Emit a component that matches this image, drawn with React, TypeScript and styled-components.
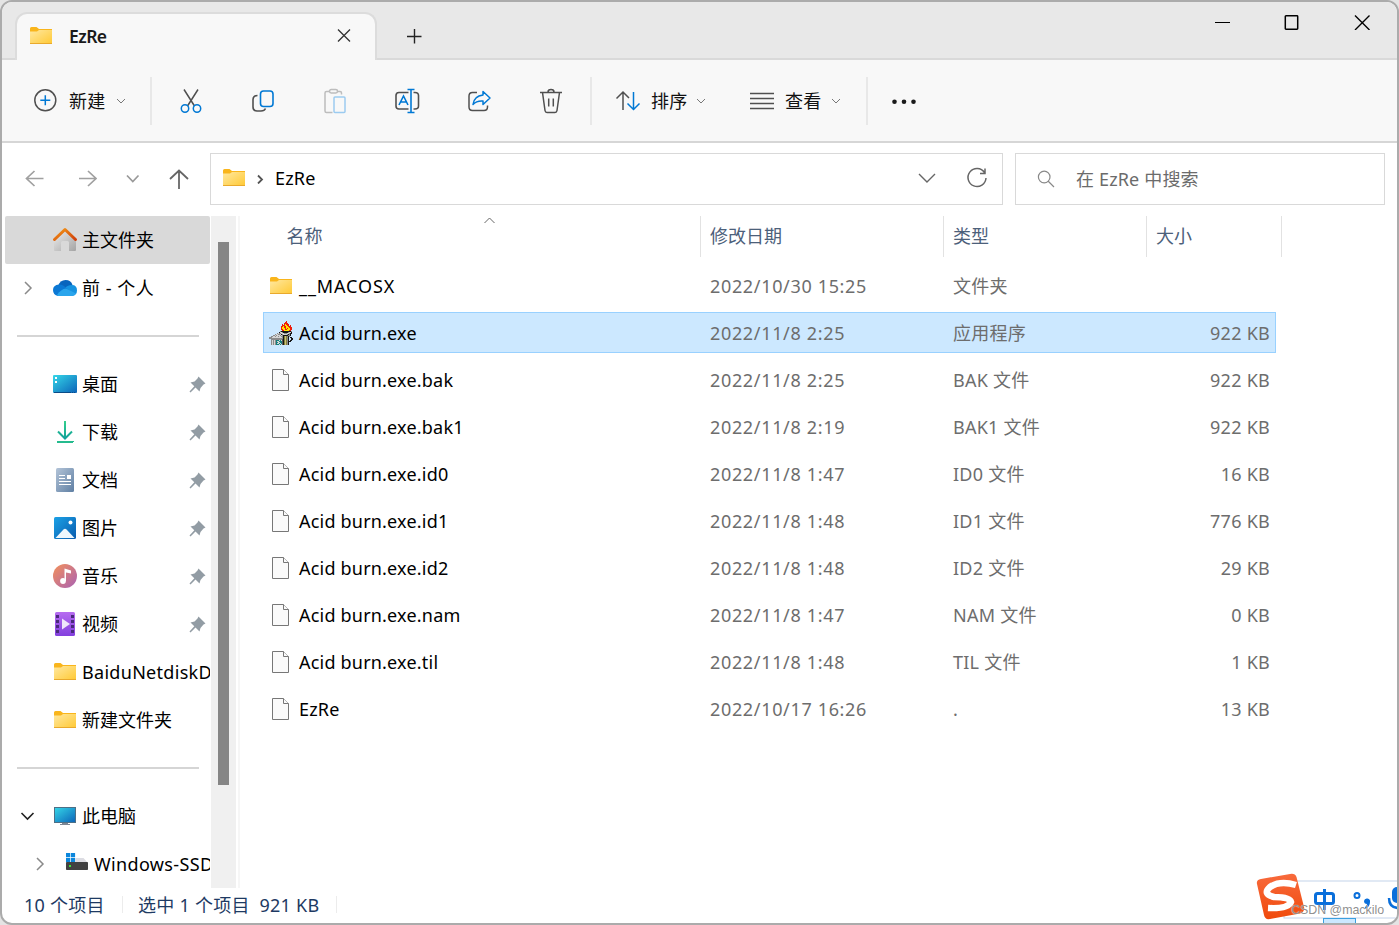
import React from "react";
import styled, { createGlobalStyle } from "styled-components";

const Global = createGlobalStyle`
  * { box-sizing: border-box; }
  html, body { margin: 0; height: 100%; overflow: hidden; }
  body {
    font-family: "Noto Sans", "Noto Sans CJK SC", sans-serif;
    font-size: 18px;
    font-weight: 400;
    color: #000;
    background: #e4e4e4;
  }
  svg { display: block; flex: none; }
`;

const Window = styled.div`
  position: relative;
  width: 1399px;
  height: 925px;
  border: 2px solid #ababab;
  border-radius: 12px;
  background: #fff;
  display: flex;
  flex-direction: column;
  overflow: hidden;
`;

const TitleBar = styled.header`
  height: 58px;
  flex: none;
  display: flex;
  background: #e8e8e8;
  border-bottom: 2px solid #d9d9d9;
  padding: 10px 0 0 13px;
`;

const Tab = styled.div`
  width: 362px;
  height: 48px;
  flex: none;
  display: flex;
  align-items: center;
  padding: 0 23px 2px 12px;
  background: #f8f8f8;
  border: 2px solid #dcdcdc;
  border-bottom: 0;
  border-radius: 12px 12px 0 0;
`;

const TabTitle = styled.span`
  flex: 1;
  margin-left: 16px;
  font-size: 17.5px;
  font-weight: 600;
  letter-spacing: -0.55px;
  color: #1a1a1a;
`;

const NewTab = styled.div`
  margin: 15px 0 0 28px;
  flex: 1;
`;

const Caption = styled.div`
  display: flex;
  gap: 54px;
  margin: 0 27px 0 0;
`;

const Toolbar = styled.nav`
  height: 83px;
  flex: none;
  display: flex;
  align-items: center;
  background: #f8f8f8;
  border-bottom: 2px solid #d6d6d6;
  padding-left: 31px;
`;

const Tool = styled.div<{ $w: number; $gap?: number }>`
  width: ${(p) => p.$w}px;
  flex: none;
  display: flex;
  align-items: center;
  gap: ${(p) => p.$gap ?? 0}px;
  color: #111;
`;

const ToolLabel = styled.span`
  line-height: 24px;
  letter-spacing: 0.3px;
  margin-right: -2px;
`;

const Divider = styled.i<{ $right: number }>`
  width: 2px;
  height: 48px;
  flex: none;
  margin-right: ${(p) => p.$right}px;
  background: #e8e8e8;
`;

const NavBar = styled.div`
  height: 73px;
  flex: none;
  display: flex;
  padding: 10px 12px 11px 22px;
`;

const NavButtons = styled.div`
  width: 186px;
  flex: none;
  display: flex;
  align-items: center;
`;

const NavSlot = styled.div<{ $w: number }>`
  width: ${(p) => p.$w}px;
`;

const Field = styled.div<{ $w: number; $left: number; $gap?: number }>`
  width: ${(p) => p.$w}px;
  height: 52px;
  flex: none;
  display: flex;
  align-items: center;
  margin-left: ${(p) => p.$gap ?? 0}px;
  padding: 0 14px 2px ${(p) => p.$left}px;
  border: 1px solid #d9d9d9;
`;

const PathText = styled.span`
  flex: 1;
  margin-left: 11px;
  letter-spacing: 0.2px;
`;

const SearchText = styled.span`
  margin-left: 19px;
  color: #6b6b6b;
  letter-spacing: 0.15px;
`;

const RefreshSlot = styled.div`
  margin-left: 30px;
`;

const Body = styled.main`
  height: 672px;
  flex: none;
  display: flex;
`;

const Sidebar = styled.aside`
  width: 208px;
  padding-left: 3px;
  flex: none;
  overflow: hidden;
`;

const SideRow = styled.div<{ $active?: boolean; $indent?: number }>`
  height: 48px;
  display: flex;
  align-items: center;
  padding-left: ${(p) => p.$indent ?? 0}px;
  background: ${(p) => (p.$active ? "#d9d9d9" : "transparent")};
  border-radius: 2px;
`;

const Chevron = styled.div`
  width: 46px;
  padding-left: 15px;
  flex: none;
`;

const SideIcon = styled.div`
  width: 28px;
  flex: none;
  display: flex;
  justify-content: center;
`;

const SideLabel = styled.span<{ $track?: number }>`
  flex: 1;
  min-width: 0;
  overflow: hidden;
  white-space: nowrap;
  margin-left: 3px;
  line-height: 28px;
  letter-spacing: ${(p) => p.$track ?? 0}px;
`;

const PinSlot = styled.div`
  width: 21px;
`;

const SideRule = styled.div`
  height: 48px;
  padding: 23px 11px 0 12px;
  &::after {
    content: "";
    display: block;
    height: 2px;
    background: #d5d5d5;
  }
`;

const ScrollTrack = styled.div`
  width: 25px;
  margin-left: 1px;
  flex: none;
  background: #f0f0f0;
  padding: 26px 7px 0;
`;

const ScrollThumb = styled.div`
  height: 543px;
  background: #868686;
`;

const Splitter = styled.div`
  width: 2px;
  margin-left: 2px;
  flex: none;
  background: #f6f6f6;
`;

const List = styled.section`
  flex: 1;
  padding-left: 23px;
`;

const HeadRow = styled.div`
  display: flex;
  height: 49px;
`;

const HeadCell = styled.div<{ $w: number; $left: number }>`
  position: relative;
  width: ${(p) => p.$w}px;
  height: 41px;
  padding-left: ${(p) => p.$left}px;
  line-height: 41px;
  color: #4c607a;
  border-right: 1px solid #e2e2e2;
`;

const SortMark = styled.div`
  position: absolute;
  top: 1px;
  left: 220px;
`;

const FileRow = styled.div<{ $selected?: boolean }>`
  width: 1013px;
  height: 41px;
  margin-bottom: 6px;
  display: flex;
  align-items: center;
  line-height: 28px;
  border: 1px solid ${(p) => (p.$selected ? "#99d1ff" : "transparent")};
  background: ${(p) => (p.$selected ? "#cce8ff" : "transparent")};
`;

const FileIcon = styled.div`
  width: 35px;
  padding-left: 5px;
  flex: none;
`;

const FileName = styled.span<{ $track: number }>`
  width: 411px;
  letter-spacing: ${(p) => p.$track}px;
`;

const Meta = styled.span<{ $w: number; $right?: boolean; $track?: number }>`
  width: ${(p) => p.$w}px;
  text-align: ${(p) => (p.$right ? "right" : "left")};
  letter-spacing: ${(p) => p.$track ?? 0}px;
  color: #6d6d6d;
`;

const StatusBar = styled.footer`
  flex: 1;
  display: flex;
  align-items: center;
  padding: 0 0 3px 22px;
  color: #1e3a63;
`;

const StatusText = styled.span<{ $w: number }>`
  width: ${(p) => p.$w}px;
  white-space: pre;
  letter-spacing: 0.25px;
`;

const StatusRule = styled.i<{ $right: number }>`
  width: 1px;
  height: 17px;
  background: #ececec;
  margin-right: ${(p) => p.$right}px;
`;

const ImeBar = styled.div`
  position: absolute;
  right: -2px;
  bottom: -2px;
  width: 145px;
  height: 55px;
`;

const Watermark = styled.span`
  position: absolute;
  left: 37px;
  top: 32px;
  font: 12.4px/16px "Liberation Sans", sans-serif;
  white-space: nowrap;
  color: rgba(130, 130, 130, 0.9);
  text-shadow: 0 0 1px #fff;
`;

const HiddenDefs = styled.svg`
  position: absolute;
`;

const Defs = () => (
  <HiddenDefs width="0" height="0">
    <defs>
      <linearGradient id="fold" x1="0" y1="0" x2="1" y2="1"><stop stopColor="#ffe8a0" /><stop offset="1" stopColor="#ffc934" /></linearGradient>
      <linearGradient id="screen" x1="0" y1="0" x2="1" y2="1"><stop stopColor="#35d7e8" /><stop offset="1" stopColor="#0b63b8" /></linearGradient>
      <linearGradient id="roof" x1="0" y1="0" x2="1" y2="1"><stop stopColor="#f59a17" /><stop offset="1" stopColor="#cf3f0c" /></linearGradient>
      <linearGradient id="wall" x1="0" y1="0" x2="1" y2="1"><stop stopColor="#ededed" /><stop offset="1" stopColor="#a4a4a4" /></linearGradient>
      <linearGradient id="down" x1="0" y1="0" x2="0" y2="1"><stop stopColor="#34cf8c" /><stop offset="1" stopColor="#10a29a" /></linearGradient>
      <linearGradient id="doc" x1="0" y1="0" x2="1" y2="1"><stop stopColor="#b3c4d8" /><stop offset="1" stopColor="#5f7fa3" /></linearGradient>
      <linearGradient id="pic" x1="0" y1="0" x2="1" y2="1"><stop stopColor="#1ba1e6" /><stop offset="1" stopColor="#0a5cae" /></linearGradient>
      <linearGradient id="music" x1="0" y1="0" x2="1" y2="1"><stop stopColor="#f4915a" /><stop offset="1" stopColor="#a961b4" /></linearGradient>
      <linearGradient id="video" x1="0" y1="0" x2="0" y2="1"><stop stopColor="#b66cf0" /><stop offset="1" stopColor="#8340de" /></linearGradient>
      <linearGradient id="sogou" x1="0" y1="0" x2="0" y2="1"><stop stopColor="#f86a3c" /><stop offset="1" stopColor="#f04a0c" /></linearGradient>
    </defs>
  </HiddenDefs>
);

const Folder = () => (
  <svg width="24" height="20" viewBox="0 0 24 20">
    <path d="M1 2.500Q1 1 2.500 1H7.500L10 3H23V8H1Z" fill="#f9b51c" />
    <path d="M1 5.500H8L10 4H23V18H1Z" fill="url(#fold)" />
    <path d="M1 17.500H23" stroke="#e9a92c" />
  </svg>
);

const Page = () => (
  <svg width="20" height="24" viewBox="0 0 20 24" fill="#fafafa" stroke="#777">
    <path d="M3.500 1.500H14.500L19.500 6.500V22.500H3.500Z" />
    <path d="M14.500 1.500V6.500H19.500" />
  </svg>
);

const sprite = [
  ".................r......",
  "................rr......",
  "...............rrrr.....",
  ".............r.ryrrr....",
  ".............rrryyrr.r..",
  "............rryrryyrrr..",
  "............ryyrryyyrrr.",
  "............ryyyryryyrr.",
  "............rryyrryyyrr.",
  ".............rryyyyyrr..",
  "...........gkkkkkkkkkkg.",
  "..........kwwgkkkkkgwwk.",
  "........gwggwwwgggwwgkk.",
  "......gwwggwkgwwwwgkgk..",
  "....ggwgwwwgwgkkkkkggk..",
  "..ggwwgwwgwwggkoyogkg...",
  "gggwwwwwwwwwwgkoyogk.kk.",
  "ggggggggggggggkoyogk..kk",
  "..gggggggggggskoyogk..kk",
  "..gwgwgtttwtwskoyogk.kk.",
  "..gwgwgtwwtttskoyogkkk..",
  "..gwgwgttwwttskoyogk....",
  "..gwgwgtwwtwtskoyogk....",
  "..gwgwgtttwtwskoyogk....",
];
const inks: Record<string, string> = { r: "#ed1c0c", y: "#ffe600", k: "#151515", g: "#8b8b8b", w: "#d5d5d5", o: "#85803a", t: "#118080", s: "#555" };

const Torch = () => (
  <svg width="24" height="24" viewBox="0 0 24 24" shapeRendering="crispEdges">
    {sprite.flatMap((line, y) =>
      [...line].map((c, x) => (c === "." ? null : <rect key={`${x}-${y}`} x={x} y={y} width="1" height="1" fill={c === "y" && y > 13 ? "#c9c37a" : inks[c]} />))
    )}
  </svg>
);

const Home = () => (
  <svg width="26" height="26" viewBox="0 0 26 26">
    <path d="M2 13L13 4L24 13V23Q24 24 23 24H17V15.500Q17 14 15.500 14H10.500Q9 14 9 15.500V24H3Q2 24 2 23Z" fill="url(#wall)" />
    <path d="M2.500 12.500L13 2.500L23.500 12.500" fill="none" stroke="url(#roof)" strokeWidth="3" strokeLinejoin="round" strokeLinecap="round" />
  </svg>
);

const Cloud = () => (
  <svg width="26" height="18" viewBox="0 0 26 18">
    <path d="M6 7Q8 1 13.500 1Q19 1 20.500 6L16 13L5 12Z" fill="#0864bd" />
    <path d="M20 6Q25 6 25 11.500Q25 16 20 17L12 10Q15 6 20 6Z" fill="#1592e0" />
    <path d="M7 5.500Q11 5 14 9L18 12L6 17Q1 16 1 11Q1 6 7 5.500Z" fill="#0b78d4" />
    <path d="M5 16Q9 10 14 9.500L24 14.500Q22.500 17 20 17H6.500Q5 17 5 16Z" fill="#2aa5ec" />
  </svg>
);

const Desktop = () => (
  <svg width="24" height="18" viewBox="0 0 24 18">
    <rect width="24" height="18" rx="1" fill="url(#screen)" />
    <path d="M2 2h2v2H2zM2 6h2v2H2z" fill="#fff" />
    <path d="M1 17.500H18M19 17.500H20M21 17.500H22" stroke="#0b4b86" />
  </svg>
);

const Download = () => (
  <svg width="18" height="24" viewBox="0 0 18 24" fill="none" stroke="url(#down)" strokeWidth="2">
    <path d="M9.010 1L9 18M2 11.500L9 18.500L16 11.500" /><path d="M1 22H17V22.010" stroke="#25bb8e" />
  </svg>
);

const Doc = () => (
  <svg width="18" height="24" viewBox="0 0 18 24">
    <rect width="18" height="24" rx="1.500" fill="url(#doc)" />
    <path d="M3 7.500H9M3 10.500H9M3 13.500H15M3 16.500H15" stroke="#fff" strokeWidth="1.200" />
    <rect x="11" y="7" width="4" height="4" fill="#fff" />
  </svg>
);

const Picture = () => (
  <svg width="22" height="22" viewBox="0 0 22 22">
    <rect width="22" height="22" rx="1.500" fill="url(#pic)" />
    <path d="M1.500 21L9.500 12.500Q11 11 12.500 12.500L20.500 21Z" fill="#eef7fd" />
    <circle cx="16.500" cy="5.500" r="2" fill="#fff" />
  </svg>
);

const Music = () => (
  <svg width="24" height="24" viewBox="0 0 24 24">
    <circle cx="12" cy="12" r="12" fill="url(#music)" />
    <circle cx="10" cy="17" r="2.900" fill="#fff" />
    <path d="M11.500 17V4.500L18 6.500V9.500L13 8.500V17Z" fill="#fff" />
  </svg>
);

const Video = () => (
  <svg width="20" height="24" viewBox="0 0 20 24">
    <rect width="20" height="24" rx="1.500" fill="url(#video)" />
    <path d="M1 3h3v3H1zM1 8h3v3H1zM1 13h3v3H1zM1 18h3v3H1zM16 3h3v3h-3zM16 8h3v3h-3zM16 13h3v3h-3zM16 18h3v3h-3z" fill="#4a2a7c" />
    <path d="M7 6.500L15 12L7 17.500Z" fill="#efe6fa" />
  </svg>
);

const Computer = () => (
  <svg width="24" height="20" viewBox="0 0 24 20">
    <path d="M9 16h6v2h2v1H7v-1h2z" fill="#7c8794" />
    <rect x="1.500" y="1.500" width="21" height="15" fill="url(#screen)" stroke="#4d6f86" />
  </svg>
);

const Drive = () => (
  <svg width="24" height="22" viewBox="0 0 24 22">
    <path d="M11 5H18.500L23 10H1L3 7Z" fill="#dcdce2" />
    <rect x="1" y="9" width="22" height="8" rx="0.800" fill="#414141" />
    <rect x="4" y="12" width="2" height="2" fill="#3be03b" />
    <path d="M0.500 -1h10v10h-10z" fill="#fff" />
    <path d="M1 0h4.200v4.200H1zM5.900 0h4.200v4.200H5.900zM1 4.900h4.200v4.200H1zM5.900 4.900h4.200v4.200H5.900z" fill="#0c87dc" />
  </svg>
);

const Pin = () => (
  <svg width="17" height="17" viewBox="0 0 17 17">
    <path d="M9.500 0.500L16.500 7.500L14.500 8.500L11.500 12L10.500 15.500L6.500 11.500L1.500 16.500L0.500 15.500L5.300 10.300L1.500 6.500L5.500 5.500L8.500 2.500Z" fill="#929ca4" />
  </svg>
);

const Glyph = ({ w, h, d, c = "#333", s = 1.3 }: { w: number; h: number; d: string; c?: string; s?: number }) => (
  <svg width={w} height={h} viewBox={`0 0 ${w} ${h}`} fill="none" stroke={c} strokeWidth={s}>
    <path d={d} />
  </svg>
);

const SmallDown = () => <Glyph w={10} h={8} d="M1 2L5 6L9 2" c="#777" s={1} />;

const blue = "#0078d4";
const ink = "#505050";

const NewIcon = () => (
  <svg width="24" height="26" viewBox="0 0 24 26" fill="none" strokeWidth="1.500">
    <circle cx="12.300" cy="12.300" r="10.500" stroke={ink} /><path d="M12.300 7.300V17.300M7.300 12.300H17.300" stroke={blue} />
  </svg>
);
const CutIcon = () => (
  <svg width="24" height="26" viewBox="0 0 24 26" fill="none" strokeWidth="1.500">
    <path d="M5 1.500L15.500 18M19 1.500L8.500 18" stroke={ink} />
    <circle cx="6" cy="20.500" r="3.700" stroke={blue} /><circle cx="18" cy="20.500" r="3.700" stroke={blue} />
  </svg>
);
const CopyIcon = () => (
  <svg width="24" height="24" viewBox="0 0 24 24" fill="none" strokeWidth="1.600">
    <path d="M6.500 6.500Q2 6.500 2 10.500V18Q2 22 6 22H10Q13.500 22 14.500 19.500" stroke={ink} />
    <rect x="9.500" y="2" width="12.500" height="15.500" rx="3" stroke={blue} />
  </svg>
);
const PasteIcon = () => (
  <svg width="24" height="26" viewBox="0 0 24 26" fill="none" strokeWidth="1.500">
    <path d="M6.500 3.500H3.500Q2 3.500 2 5V23Q2 24.500 3.500 24.500H9.500M14 3.500H17Q18.500 3.500 18.500 5V6.500" stroke="#bdbdbd" />
    <rect x="6.500" y="1.500" width="8" height="3.500" rx="1.700" stroke="#bdbdbd" />
    <rect x="11" y="9" width="11" height="15.500" rx="1" stroke="#9ccbf0" />
  </svg>
);
const RenameIcon = () => (
  <svg width="26" height="26" viewBox="0 0 26 26" fill="none" strokeWidth="1.600">
    <path d="M14.500 4.500H5Q2 4.500 2 7.500V18Q2 21 5 21H14.500M19.500 4.500H21Q24.500 4.500 24.500 7.500V18Q24.500 21 21 21H19.500" stroke={ink} />
    <path d="M17 2V24M13.500 1.500H20.500M13.500 24.500H20.500M5 17L9.500 8L14 17M6.500 14H12.500" stroke={blue} />
  </svg>
);
const ShareIcon = () => (
  <svg width="26" height="24" viewBox="0 0 26 24" fill="none" strokeWidth="1.500" strokeLinejoin="round">
    <path d="M10 3.500H5.500Q2 3.500 2 7V18Q2 21.500 5.500 21.500H17Q20.500 21.500 20.500 18V16.500" stroke={ink} />
    <path d="M16 2.500L23 9L16 15.500V12Q9.500 11.500 6 15.500Q7 7 16 6Z" stroke={blue} />
  </svg>
);
const TrashIcon = () => (
  <svg width="24" height="26" viewBox="0 0 24 26" fill="none" stroke={ink} strokeWidth="1.500">
    <path d="M1 4.500H23M3.500 4.500L6 22.500Q6.300 24.500 8 24.500H16Q17.700 24.500 18 22.500L20.500 4.500M9 4Q9 1.500 12 1.500Q15 1.500 15 4M9.700 10.500V18.500M14.300 10.500V18.500" />
  </svg>
);
const SortIcon = () => (
  <svg width="26" height="22" viewBox="0 0 26 22" fill="none" strokeWidth="1.500">
    <path d="M8 20V2M1.500 8.500L8 2L14 8" stroke={ink} /><path d="M18.500 2V20M12.500 13.500L18.500 19.500L24.500 13.500" stroke={blue} />
  </svg>
);

const files = [
  ["folder", "__MACOSX", "2022/10/30 15:25", "文件夹", ""],
  ["torch", "Acid burn.exe", "2022/11/8 2:25", "应用程序", "922 KB"],
  ["page", "Acid burn.exe.bak", "2022/11/8 2:25", "BAK 文件", "922 KB"],
  ["page", "Acid burn.exe.bak1", "2022/11/8 2:19", "BAK1 文件", "922 KB"],
  ["page", "Acid burn.exe.id0", "2022/11/8 1:47", "ID0 文件", "16 KB"],
  ["page", "Acid burn.exe.id1", "2022/11/8 1:48", "ID1 文件", "776 KB"],
  ["page", "Acid burn.exe.id2", "2022/11/8 1:48", "ID2 文件", "29 KB"],
  ["page", "Acid burn.exe.nam", "2022/11/8 1:47", "NAM 文件", "0 KB"],
  ["page", "Acid burn.exe.til", "2022/11/8 1:48", "TIL 文件", "1 KB"],
  ["page", "EzRe", "2022/10/17 16:26", ".", "13 KB"],
];

const pinned: [string, React.ReactNode][] = [
  ["桌面", <Desktop />],
  ["下载", <Download />],
  ["文档", <Doc />],
  ["图片", <Picture />],
  ["音乐", <Music />],
  ["视频", <Video />],
];

export default function App() {
  return (
    <>
      <Global />
      <Defs />
      <Window>
        <TitleBar>
          <Tab>
            <Folder />
            <TabTitle>EzRe</TabTitle>
            <Glyph w={16} h={16} d="M2 1.500L14 13.500M14 1.500L2 13.500" s={1.300} />
          </Tab>
          <NewTab><Glyph w={18} h={18} d="M9.500 2V16.500M2 9.500H16.500" c="#222" s={1.400} /></NewTab>
          <Caption>
            <Glyph w={16} h={18} d="M1 10.500H16" c="#000" s={1} />
            <Glyph w={16} h={18} d="M2 3.800H13Q13.700 3.800 13.700 4.500V16.500Q13.700 17.200 13 17.200H2Q1.300 17.200 1.300 16.500V4.500Q1.300 3.800 2 3.800Z" c="#000" s={1.500} />
            <Glyph w={16} h={18} d="M1 3.500L15.500 18M15.500 3.500L1 18" c="#000" s={1.400} />
          </Caption>
        </TitleBar>
        <Toolbar>
          <Tool $w={117} $gap={12}><NewIcon /><ToolLabel>新建</ToolLabel><SmallDown /></Tool>
          <Divider $right={27} />
          <Tool $w={72}><CutIcon /></Tool>
          <Tool $w={72}><CopyIcon /></Tool>
          <Tool $w={71}><PasteIcon /></Tool>
          <Tool $w={73}><RenameIcon /></Tool>
          <Tool $w={72}><ShareIcon /></Tool>
          <Tool $w={51}><TrashIcon /></Tool>
          <Divider $right={23} />
          <Tool $w={135} $gap={10}><SortIcon /><ToolLabel>排序</ToolLabel><SmallDown /></Tool>
          <Tool $w={116} $gap={11}>
            <Glyph w={24} h={20} d="M0 2.500H24M0 7.500H24M0 12.500H24M0 17.500H24" c={ink} />
            <ToolLabel>查看</ToolLabel><SmallDown />
          </Tool>
          <Divider $right={23} />
          <svg width="26" height="8" viewBox="0 0 26 8" fill="#1a1a1a"><circle cx="3.500" cy="4.800" r="2.300" /><circle cx="13" cy="4.800" r="2.300" /><circle cx="22.500" cy="4.800" r="2.300" /></svg>
        </Toolbar>
        <NavBar>
          <NavButtons>
            <NavSlot $w={53}><Glyph w={20} h={20} d="M10.500 2L2.500 9.500L10.500 17M2.500 9.500H19.500" c="#a0a0a0" s={1.700} /></NavSlot>
            <NavSlot $w={48}><Glyph w={20} h={20} d="M11 2L19 9.500L11 17M2 9.500H19" c="#a0a0a0" s={1.700} /></NavSlot>
            <NavSlot $w={43}><Glyph w={15} h={10} d="M2 1.500L7.800 7.500L13.500 1.500" c="#999" s={1.700} /></NavSlot>
            <Glyph w={22} h={22} d="M2 11L11 2.500L20 11M11 3V21" c="#666" s={1.800} />
          </NavButtons>
          <Field $w={793} $left={11}>
            <Folder />
            <NavSlot $w={18}><svg width="18" height="12" viewBox="0 0 18 12" fill="none" stroke="#555" strokeWidth="1.800"><path d="M12 3.500L16 7.500L12 11.500" /></svg></NavSlot>
            <PathText>EzRe</PathText>
            <Glyph w={18} h={12} d="M1 2L9 10L17 2" c="#666" s={1.400} />
            <RefreshSlot><Glyph w={22} h={22} d="M18.500 5.500A9 9 0 1 0 20 11M19 1.500V6.500H14" c="#666" s={1.500} /></RefreshSlot>
          </Field>
          <Field $w={370} $left={21} $gap={12}>
            <Glyph w={20} h={20} d="M13 9A5.800 5.800 0 1 1 1.400 9A5.800 5.800 0 1 1 13 9M11.500 13.500L17 19" c="#888" s={1.200} />
            <SearchText>在 EzRe 中搜索</SearchText>
          </Field>
        </NavBar>
        <Body>
          <Sidebar>
            <SideRow $active><Chevron /><SideIcon><Home /></SideIcon><SideLabel>主文件夹</SideLabel></SideRow>
            <SideRow><Chevron><Glyph w={14} h={14} d="M5 1L11 7L5 13" c="#8a8a8a" s={1.500} /></Chevron><SideIcon><Cloud /></SideIcon><SideLabel $track={0.5}>前 - 个人</SideLabel></SideRow>
            <SideRule />
            {pinned.map(([name, icon]) => (
              <SideRow key={name}><Chevron /><SideIcon>{icon}</SideIcon><SideLabel>{name}</SideLabel><PinSlot><Pin /></PinSlot></SideRow>
            ))}
            <SideRow><Chevron /><SideIcon><Folder /></SideIcon><SideLabel $track={0.3}>BaiduNetdiskD</SideLabel></SideRow>
            <SideRow><Chevron /><SideIcon><Folder /></SideIcon><SideLabel>新建文件夹</SideLabel></SideRow>
            <SideRule />
            <SideRow><Chevron><Glyph w={16} h={12} d="M1.500 3L7.500 9L13.500 3" c="#222" s={1.600} /></Chevron><SideIcon><Computer /></SideIcon><SideLabel>此电脑</SideLabel></SideRow>
            <SideRow $indent={12}><Chevron><Glyph w={14} h={14} d="M5 1L11 7L5 13" c="#8a8a8a" s={1.500} /></Chevron><SideIcon><Drive /></SideIcon><SideLabel $track={0.35}>Windows-SSD</SideLabel></SideRow>
          </Sidebar>
          <ScrollTrack><ScrollThumb /></ScrollTrack>
          <Splitter />
          <List>
            <HeadRow>
              <HeadCell $w={438} $left={23.5}>名称<SortMark><Glyph w={12} h={8} d="M1.500 6L6.500 1L11.500 6" c="#666" s={1} /></SortMark></HeadCell>
              <HeadCell $w={243} $left={9}>修改日期</HeadCell>
              <HeadCell $w={203} $left={9}>类型</HeadCell>
              <HeadCell $w={135} $left={9}>大小</HeadCell>
            </HeadRow>
            {files.map(([kind, name, date, type, size]) => (
              <FileRow key={name} $selected={kind === "torch"}>
                <FileIcon>{kind === "folder" ? <Folder /> : kind === "torch" ? <Torch /> : <Page />}</FileIcon>
                <FileName $track={kind === "folder" ? 0.9 : 0.2}>{name}</FileName>
                <Meta $w={243} $track={0.66}>{date}</Meta>
                <Meta $w={203} $track={0.25}>{type}</Meta>
                <Meta $w={114} $right $track={0.25}>{size}</Meta>
              </FileRow>
            ))}
          </List>
        </Body>
        <StatusBar>
          <StatusText $w={98}>10 个项目</StatusText>
          <StatusRule $right={15} />
          <StatusText $w={198}>{"选中 1 个项目  921 KB"}</StatusText>
          <StatusRule $right={0} />
        </StatusBar>
        <ImeBar>
          <svg width="145" height="55" viewBox="0 0 145 55">
            <rect x="30" y="11" width="120" height="37" fill="#fff" stroke="#c4d3ea" />
            <rect x="69.500" y="48.500" width="32" height="5" fill="#cce8ff" stroke="#3aa0e0" />
            <path d="M7 9L36 4Q41 3 42.500 7L50 37Q51 42 46 43.500L16 49Q11 50 10 45L3 14Q2 10 7 9Z" fill="url(#sogou)" />
            <path d="M42 15Q26 10 16 17Q8 24 20 27Q36 27 37 32Q34 39 14 38" fill="none" stroke="#fff" strokeWidth="6.500" />
            <g fill="none" stroke="#0a6fdb" strokeWidth="3"><rect x="61.500" y="23.500" width="18" height="10" rx="2" /><path d="M70.500 19V40" /><circle cx="103" cy="25.500" r="2.500" strokeWidth="2" /></g>
            <path d="M110 31a3 3 0 1 1 6 1q0 5-5 7v-2q2-1 2-3q-3 0-3-3Z" fill="#0a6fdb" />
            <rect x="138" y="17" width="10" height="16" rx="5" fill="#0a6fdb" />
            <path d="M135 28Q135 38 145 38" fill="none" stroke="#0a6fdb" strokeWidth="2.500" />
          </svg>
          <Watermark>CSDN @mackilo</Watermark>
        </ImeBar>
      </Window>
    </>
  );
}
